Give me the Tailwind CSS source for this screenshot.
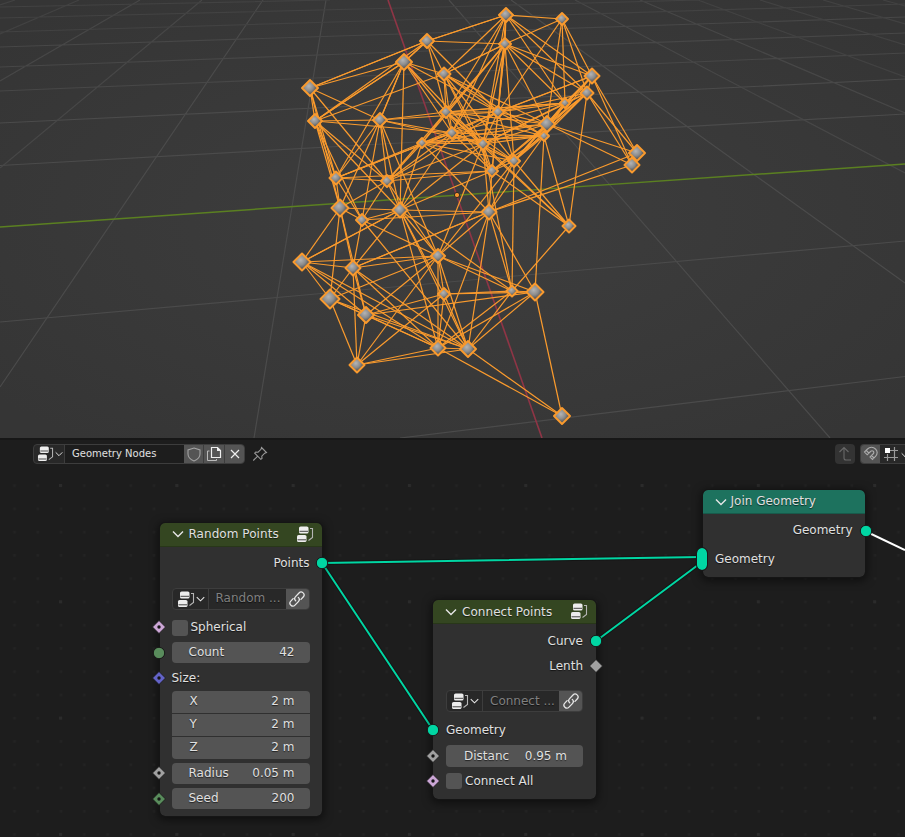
<!DOCTYPE html>
<html lang="en">
<head>
<meta charset="utf-8">
<title>Geometry Nodes</title>
<script src="https://cdn.jsdelivr.net/npm/@tailwindcss/browser@4"></script>
</head>
<body class="w-[905px] h-[837px] overflow-hidden bg-[#1d1d1d] flex flex-col text-[#e0e0e0] text-[12px] leading-none font-['DejaVu_Sans',sans-serif]">

<svg class="absolute size-0">
  <defs>
    <radialGradient id="bg" cx="50%" cy="50%" r="65%"><stop offset="0" stop-color="#3e3e3e"/><stop offset="1" stop-color="#353535"/></radialGradient>
    <radialGradient id="gem" cx="42%" cy="38%" r="58%"><stop offset="0" stop-color="#b4b4b4"/><stop offset=".5" stop-color="#8c8c8c"/><stop offset="1" stop-color="#444"/></radialGradient>
    <pattern id="minor" width="23.26" height="23.26" patternUnits="userSpaceOnUse" x="733.8" y="484.3"><rect x="0.5" y="0" width="2.500" height="2.500" fill="#232323"/></pattern>
    <symbol id="tree" viewBox="0 0 18 17">
      <rect x="3" y="0.500" width="9.500" height="7" rx="1.600" fill="#ededed"/><path d="M3.500 5.300h8.500" stroke="#333" stroke-width=".9"/>
      <rect x="1" y="9" width="9.500" height="7" rx="1.600" fill="#ededed"/><path d="M1.500 13.800h8.500" stroke="#333" stroke-width=".9"/>
      <path d="M14 2.500H16.500v9l-4 3" stroke="#b5b5b5" stroke-width="1.100" fill="none"/>
    </symbol>
    <symbol id="down" viewBox="0 0 12 8"><path d="M1 1.500l5 5 5-5" stroke="#e6e6e6" stroke-width="1.400" fill="none"/></symbol>
    <symbol id="link" viewBox="0 0 18 18"><g fill="none" stroke="#e6e6e6" stroke-width="1.300" stroke-linecap="round"><path d="M7.700 10.800a3 3 0 0 1-.1-4.200l3.400-3.600a2.900 2.900 0 0 1 4.200 4l-2.200 2.400"/><path d="M10.300 7.400a3 3 0 0 1 .1 4.200L7 15.100a2.900 2.900 0 0 1-4.200-4l2.300-2.500"/></g></symbol>
    <symbol id="sock" viewBox="0 0 14 14"><circle cx="7" cy="7" r="5.700" stroke="#181818" stroke-width="1"/></symbol>
    <symbol id="dia" viewBox="0 0 14 14"><path d="M7 .5L13.500 7 7 13.500.5 7z" stroke="#181818" stroke-width=".8"/></symbol>
    <symbol id="diadot" viewBox="0 0 14 14"><path d="M7 .5L13.500 7 7 13.500.5 7z" stroke="#181818" stroke-width=".8"/><circle cx="7" cy="7" r="1.700" fill="#151515"/></symbol>
  </defs>
</svg>

<!-- 3D viewport -->
<section class="h-[438px] shrink-0 overflow-hidden">
  <svg width="905" height="438" viewBox="0 0 905 438" class="block">
    <rect width="905" height="438" fill="url(#bg)"/>
    <g stroke="#4b4b4b" stroke-width="1.200" fill="none">
      <path d="M400 438L905 376.500M0 322L277 297.500L560 272L905 241M0 165.500L400 143L905 114"/>
      <path d="M0 123L400 104L905 79M0 387L263 0M254 438L326 0M449 0L830 438M511 0L905 283"/>
      <g stroke="#474747"><path d="M0 91L400 74.500L905 53M0 67L400 52L905 33M0 47L400 34L905 17M0 168L202 0M0 81L140 0M575 0L905 173M640 0L905 113"/></g>
      <g stroke="#424242"><path d="M0 32L400 20L905 4M0 18L400 8L700 0M0 7L330 0M0 34L79 0M0 5L15 0M698 0L905 77M760 0L905 45M823 0L905 24M883 0L905 6"/></g>
    </g>
    <path d="M0 227L905 164" stroke="#5b8021" stroke-width="1.400"/>
    <path d="M388 0L542 438" stroke="#8f3546" stroke-width="1.600"/>
    <g id="edges" stroke="#fb9b2d" stroke-width="1.200"></g>
    <g id="gems" stroke="#f99a2e" stroke-width="2" stroke-linejoin="round" fill="url(#gem)"></g>
    <circle cx="457" cy="195" r="2.600" fill="#f7952d" stroke="#222" stroke-width=".9"/>
  </svg>
</section>

<!-- Node editor -->
<section class="relative flex-1 border-t-2 border-[#171717]">
  <svg class="absolute left-0 -top-[2px]" width="905" height="399" viewBox="0 438 905 399">
    <rect y="470" width="905" height="367" fill="url(#minor)"/>
    <g id="major" fill="#2b2b2b"></g>
    <g fill="none" stroke="#111" stroke-width="4" opacity=".6"><path d="M322 563L702 557M322 563L433 730M596 641L702 562"/></g>
    <g fill="none" stroke="#00d6a3" stroke-width="2"><path d="M322 563L702 557M322 563L433 730M596 641L702 562"/></g>
    <path d="M865 531L905 550" stroke="#fff" stroke-width="2"/>
  </svg>

  <header class="relative h-[28px] pt-1 pl-[33px] flex items-start">
    <div class="flex h-5 w-[212px] rounded-[4px] border border-[#3d3d3d] bg-[#282828] overflow-hidden">
      <div class="w-[31px] flex items-center pl-[3px] gap-[1px] border-r border-[#3d3d3d]">
        <svg class="shrink-0" width="17" height="16"><use href="#tree"/></svg><svg class="shrink-0" width="8" height="6"><use href="#down"/></svg>
      </div>
      <div class="w-[119px] bg-[#1d1d1d] flex items-center pl-[7px] text-[10px]">Geometry Nodes</div>
      <div class="flex-1 flex bg-[#545454]">
        <div class="w-[20px] flex items-center justify-center border-r border-[#3d3d3d]"><svg width="14" height="15" viewBox="0 0 14 15"><path d="M7 1L13 3v4c0 3.500-2.500 5.500-6 7C3.500 12.500 1 10.500 1 7V3z" fill="none" stroke="#a2a2a2" stroke-width="1.100"/></svg></div>
        <div class="w-[21px] flex items-center justify-center border-r border-[#3d3d3d]"><svg width="16" height="16" viewBox="0 0 16 16"><path d="M5.500 1.500h6l3 3v7h-9z" fill="none" stroke="#eee" stroke-width="1.200"/><path d="M11 1v4h4z" fill="#eee"/><path d="M3.500 5h-2v9.500h9V13" fill="none" stroke="#bbb"/></svg></div>
        <div class="flex-1 flex items-center justify-center"><svg width="10" height="10" viewBox="0 0 10 10"><path d="M1 1l8 8M9 1l-8 8" stroke="#eee" stroke-width="1.200"/></svg></div>
      </div>
    </div>
    <svg class="ml-[7px] mt-[2px]" width="16" height="16" viewBox="0 0 16 16"><path d="M9.500 1.500l5 5-1.800.7-2.900 2.900.2 2.400-1.200.8-6.100-6.100 1-1.200 2.400.2 2.900-2.900zM5.500 10.300L1.300 14.500" fill="none" stroke="#999" stroke-width="1.100"/></svg>
    <div class="ml-auto flex gap-[5px]">
      <div class="size-5 rounded-[4px] bg-[#333] flex items-center justify-center"><svg width="14" height="16" viewBox="0 0 14 16"><path d="M1.500 6L6 1.500 10.500 6M6 2v10q0 2 2 2h5" fill="none" stroke="#686868" stroke-width="1.100"/></svg></div>
      <div class="flex h-5 w-[45px] rounded-l-[4px] border border-r-0 border-[#3d3d3d] bg-[#282828] overflow-hidden">
        <div class="w-[19px] shrink-0 bg-[#545454] flex items-center justify-center"><svg width="16" height="16" viewBox="0 0 16 16"><path d="M1.500 6l3-3a5.500 5.500 0 0 1 8 0c2 2 2 5 0 7.500l-3 3-2.500-2.500 3-3c2-2-.5-4.500-2.500-2.500l-3.300 3.300zM3.300 4.500l2.500 2.500M8.500 9.500l2.500 2.500" fill="none" stroke="#aaa" stroke-width="1.100"/></svg></div>
        <svg class="ml-[4px] mt-[1px] shrink-0" width="15" height="16" viewBox="0 0 15 16"><path d="M3.500 8v7M10.500 1v14M6 4.500h8M0 11.500h14" stroke="#999" stroke-width="1.200"/><rect x="1" y="2" width="5" height="5" fill="#fff"/></svg>
        <svg class="ml-[2px] mt-[7px] shrink-0" width="8" height="6"><use href="#down"/></svg>
      </div>
    </div>
  </header>

  <!-- Random Points -->
  <article class="absolute left-[159.5px] top-[83px] w-[162px] h-[293px] rounded-[5px] bg-[#303030] shadow-[0_2px_8px_2px_rgba(0,0,0,0.5)] outline outline-[#151515] flex flex-col [text-shadow:0_1px_1px_rgba(0,0,0,0.6)]">
    <div class="h-[24px] shrink-0 bg-[#344621] border-b border-[#283719] rounded-t-[5px] flex items-center pl-[12px] pr-[8px] pb-[1px]">
      <svg width="12" height="8"><use href="#down"/></svg><span class="ml-[5px] pb-[1px] tracking-[0.05px]">Random Points</span><svg class="ml-auto" width="18" height="17"><use href="#tree"/></svg>
    </div>
    <div class="px-[12px] pt-[5px] flex flex-col">
      <div class="relative h-[22px] flex items-center justify-end">Points<svg class="absolute -right-[19px] top-[4px]" width="14" height="14" fill="#00d6a3"><use href="#sock"/></svg></div>
      <div class="mt-[14px] h-[22px] flex rounded-[4px] border border-[#3d3d3d] bg-[#282828] overflow-hidden">
        <div class="w-[36px] border-r border-[#3d3d3d] flex items-center pl-[4px] gap-[1px]"><svg class="shrink-0" width="18" height="17"><use href="#tree"/></svg><svg class="shrink-0" width="9" height="6"><use href="#down"/></svg></div>
        <div class="flex-1 flex items-center pl-[7px] pb-[2px] text-[#808080] whitespace-nowrap">Random ...</div>
        <div class="w-[23px] shrink-0 bg-[#545454] flex items-center justify-center"><svg width="18" height="18"><use href="#link"/></svg></div>
      </div>
      <div class="relative mt-[6px] h-[23px] flex items-center gap-[3px]"><svg class="absolute -left-[20px] top-[4px]" width="14" height="14" fill="#cca6d6"><use href="#diadot"/></svg><i class="size-[16px] rounded-[3px] bg-[#545454]"></i><span class="pb-[2px]">Spherical</span></div>
      <div class="relative mt-[3px] h-[21px] rounded-[4px] bg-[#545454] flex items-center justify-between pl-[17px] pr-[15px] pb-[2px]"><svg class="absolute -left-[20px] top-[4px]" width="14" height="14" fill="#598c5c"><use href="#sock"/></svg><span>Count</span><span>42</span></div>
      <div class="relative mt-[4px] h-[22px] flex items-center"><svg class="absolute -left-[20px] top-[4px]" width="14" height="14" fill="#6363c7"><use href="#diadot"/></svg>Size:</div>
      <div class="mt-[2px] rounded-[4px] overflow-hidden flex flex-col gap-px">
        <div class="h-[22px] bg-[#545454] flex items-center justify-between pl-[18px] pr-[15px] pb-[2px]"><span>X</span><span>2 m</span></div>
        <div class="h-[22px] bg-[#545454] flex items-center justify-between pl-[18px] pr-[15px] pb-[2px]"><span>Y</span><span>2 m</span></div>
        <div class="h-[22px] bg-[#545454] flex items-center justify-between pl-[18px] pr-[15px] pb-[2px]"><span>Z</span><span>2 m</span></div>
      </div>
      <div class="relative mt-[4px] h-[21px] rounded-[4px] bg-[#545454] flex items-center justify-between pl-[17px] pr-[15px] pb-[2px]"><svg class="absolute -left-[20px] top-[3px]" width="14" height="14" fill="#a1a1a1"><use href="#diadot"/></svg><span>Radius</span><span>0.05 m</span></div>
      <div class="relative mt-[4px] h-[21px] rounded-[4px] bg-[#545454] flex items-center justify-between pl-[17px] pr-[15px] pb-[2px]"><svg class="absolute -left-[20px] top-[4px]" width="14" height="14" fill="#598c5c"><use href="#diadot"/></svg><span>Seed</span><span>200</span></div>
    </div>
  </article>

  <!-- Connect Points -->
  <article class="absolute left-[433px] top-[160px] w-[163px] h-[199px] rounded-[5px] bg-[#303030] shadow-[0_2px_8px_2px_rgba(0,0,0,0.5)] outline outline-[#151515] flex flex-col [text-shadow:0_1px_1px_rgba(0,0,0,0.6)]">
    <div class="h-[24px] shrink-0 bg-[#344621] border-b border-[#283719] rounded-t-[5px] flex items-center pl-[12px] pr-[8px]">
      <svg width="12" height="8"><use href="#down"/></svg><span class="ml-[5px] tracking-[0.05px]">Connect Points</span><svg class="ml-auto" width="18" height="17"><use href="#tree"/></svg>
    </div>
    <div class="px-[13px] pt-[6px] flex flex-col">
      <div class="relative h-[22px] flex items-center justify-end">Curve<svg class="absolute -right-[20px] top-[4px]" width="14" height="14" fill="#00d6a3"><use href="#sock"/></svg></div>
      <div class="relative mt-[3px] h-[22px] flex items-center justify-end">Lenth<svg class="absolute -right-[20px] top-[4px]" width="14" height="14" fill="#a1a1a1"><use href="#dia"/></svg></div>
      <div class="mt-[13px] h-[22px] flex rounded-[4px] border border-[#3d3d3d] bg-[#282828] overflow-hidden">
        <div class="w-[36px] border-r border-[#3d3d3d] flex items-center pl-[4px] gap-[1px]"><svg class="shrink-0" width="18" height="17"><use href="#tree"/></svg><svg class="shrink-0" width="9" height="6"><use href="#down"/></svg></div>
        <div class="flex-1 flex items-center pl-[7px] text-[#808080] whitespace-nowrap">Connect ...</div>
        <div class="w-[23px] shrink-0 bg-[#545454] flex items-center justify-center"><svg width="18" height="18"><use href="#link"/></svg></div>
      </div>
      <div class="relative mt-[7px] h-[22px] flex items-center"><svg class="absolute -left-[20px] top-[4px]" width="14" height="14" fill="#00d6a3"><use href="#sock"/></svg>Geometry</div>
      <div class="relative mt-[4px] h-[22px] rounded-[4px] bg-[#545454] flex items-center justify-between pl-[18px] pr-[16px]"><svg class="absolute -left-[20px] top-[4px]" width="14" height="14" fill="#a1a1a1"><use href="#diadot"/></svg><span>Distanc</span><span>0.95 m</span></div>
      <div class="relative mt-[3px] h-[22px] flex items-center gap-[3px]"><svg class="absolute -left-[20px] top-[4px]" width="14" height="14" fill="#cca6d6"><use href="#diadot"/></svg><i class="size-[16px] rounded-[3px] bg-[#545454]"></i>Connect All</div>
    </div>
  </article>

  <!-- Join Geometry -->
  <article class="absolute left-[702.5px] top-[50px] w-[162.5px] h-[87px] rounded-[5px] bg-[#303030] shadow-[0_2px_8px_2px_rgba(0,0,0,0.5)] outline outline-[#151515] flex flex-col [text-shadow:0_1px_1px_rgba(0,0,0,0.6)]">
    <div class="h-[24px] shrink-0 bg-[#1d725e] border-b border-[#185a4b] rounded-t-[5px] flex items-center pl-[12px]">
      <svg width="12" height="8"><use href="#down"/></svg><span class="ml-[4px] pb-[2px]">Join Geometry</span>
    </div>
    <div class="px-[12.5px] pt-[5px] flex flex-col">
      <div class="relative h-[22px] flex items-center justify-end">Geometry<svg class="absolute -right-[20px] top-[5px]" width="14" height="14" fill="#00d6a3"><use href="#sock"/></svg></div>
      <div class="relative mt-[7px] h-[22px] flex items-center"><i class="absolute -left-[18px] top-0 w-[10px] h-[22px] rounded-full bg-[#00d6a3] outline outline-[#181818]"></i>Geometry</div>
    </div>
  </article>
</section>

<script>
const P = {A:[506,15,7],B:[562,19,6],C:[427,41,7],D:[505,44,6],E:[404,62,8],F:[444,74,6.5],G:[310,88,8],H:[592,76,7.5],I:[587,93,6.5],J:[565,103,5],K:[315,121,7],L:[380,120,7],M:[446,112,6],N:[498,112,6],P:[544,136,5],O:[547,124,8],Q:[452,133,6],R:[422,143,5],S:[483,144,6],T:[514,161,6],U:[492,171,6],W:[632,165,7.5],V:[637,153,8],X:[336,178,6.5],Y:[387,181,6],Z:[340,208,8.5],a:[362,220,6],b:[400,210,7.5],c:[489,212,7.5],d:[569,226,6.5],e:[302,262,8.5],f:[353,268,7.5],g:[438,256,7],h:[330,299,9.5],i:[366,315,8],j:[444,294,6],k:[512,291,5.5],l:[535,292,8.5],m:[357,365,7.5],n:[438,348,7.5],o:[468,349,8],p:[562,416,8]};
const links = {
  A:"BCDFMNHIJSQ", B:"DHIJNO", D:"CFHIJNMSTUQRO", C:"GEKFMNA",
  E:"GKFLbMSNCXQ", F:"KMNSTQDOUP", G:"KXZLYC", K:"LXZQYbaE",
  L:"MQSXZYbagNE", M:"NQSRTOJYUPd", N:"OPQSTUIHJRY", J:"HIOPTSMQ",
  H:"IVWOPTN", I:"VWOPTdUS", O:"VWTUSQR", P:"STUQRdlc", Q:"RSTUYbX",
  R:"SYXUbTcP", S:"TUYbcgdk", T:"Ucdkg", U:"YcbdX", V:"c", W:"c",
  X:"YZaQ", Y:"bZag", Z:"baefhi", a:"bfgo", b:"cgefnojk", c:"glkoanf",
  d:"k", e:"fghinob", f:"ghinomc", g:"hinojmkl", h:"inmo", i:"mnolj",
  j:"nolk", k:"lno", l:"nop", m:"noj", n:"op", o:"p"
};
let s = "";
for (const k in links) for (const t of links[k])
  s += `<path d="M${P[k][0]} ${P[k][1]}L${P[t][0]} ${P[t][1]}"/>`;
document.getElementById("edges").innerHTML = s;
s = "";
for (const k in P) {
  const [x, y, r] = P[k];
  s += `<path d="M${x} ${y-r}L${x+r} ${y}L${x} ${y+r}L${x-r} ${y}Z"/>`;
}
document.getElementById("gems").innerHTML = s;
s = "";
for (let x = 60.5; x < 905; x += 116.3) for (let y = 485; y < 837; y += 116.3) s += `<rect x="${x-1.5}" y="${y-1}" width="3" height="3"/>`;
document.getElementById("major").innerHTML = s;
</script>
</body>
</html>
